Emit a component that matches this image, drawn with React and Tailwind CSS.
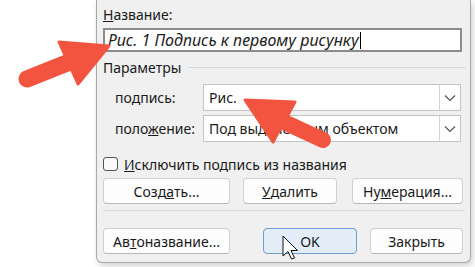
import React from "react";

const font = { fontFamily: '"Noto Sans", "Open Sans", sans-serif' };

function Chevron() {
  return (
    <svg width="12" height="8" viewBox="0 0 12 8">
      <polyline points="1,1.5 6,6.5 11,1.5" fill="none" stroke="#555" strokeWidth="1.2" />
    </svg>
  );
}

function Combo({ text }) {
  return (
    <div className="flex h-[27px] w-[258px] items-stretch border border-[#c4c4c4] bg-white">
      <div className="flex flex-1 items-center pl-[5px] text-[14px] text-[#1a1a1a]">{text}</div>
      <div className="flex w-[21px] items-center justify-center border-l border-[#d4d4d4]">
        <Chevron />
      </div>
    </div>
  );
}

function Btn({ w, children, primary }) {
  return (
    <div
      className={
        "flex h-[26px] items-center justify-center rounded-[4px] text-[14px] text-[#1a1a1a] " +
        (primary
          ? "border border-[#6e9fd0] bg-[#e3edf8]"
          : "border border-[#d0d0d0] border-b-[#b8b8b8] bg-[#fdfdfd]")
      }
      style={{ width: w }}
    >
      {children}
    </div>
  );
}

export default function App() {
  return (
    <div className="relative h-[267px] w-[475px] overflow-hidden bg-white" style={font}>
      <div className="flex pl-[96px]">
        {/* диалог */}
        <div className="h-[263px] w-[375px] rounded-b-[6px] border-x border-b border-[#a9a9a9] bg-[#f0f0f0] pl-[6px] pr-[4px] pt-[6px] shadow-[2px_3px_6px_rgba(0,0,0,0.18)]">
          <div className="h-[18px] text-[14px] leading-[18px] text-[#1a1a1a]">
            <span className="underline">Н</span>азвание:
          </div>
          <div className="mt-[4px] flex h-[24px] w-[359px] items-center border-2 border-[#8c8c8c] bg-white pl-[3px]">
            <span className="text-[16px] italic leading-[20px] text-[#222]">Рис. 1 Подпись к первому рисунку</span>
            <span className="ml-[1px] h-[17px] border-l border-black" />
          </div>
          <div className="mt-[6px] flex h-[18px] items-center">
            <span className="text-[14px] text-[#1a1a1a]">Параметры</span>
            <div className="ml-[7px] h-px flex-1 bg-[#d8d8d8]" />
          </div>
          <div className="mt-[8px] flex items-center">
            <span className="w-[100px] pl-[12px] text-[14px] text-[#1a1a1a]">
              по<span className="underline">д</span>пись:
            </span>
            <Combo text="Рис." />
          </div>
          <div className="mt-[4px] flex items-center">
            <span className="w-[100px] pl-[12px] text-[14px] text-[#1a1a1a]">
              поло<span className="underline">ж</span>ение:
            </span>
            <Combo text="Под выделенным объектом" />
          </div>
          <div className="mt-[15px] flex h-[14px] items-center">
            <div className="h-[14px] w-[15px] rounded-[3px] border border-[#555] bg-[#fafafa]" />
            <span className="ml-[6px] text-[14px] text-[#1a1a1a]">
              <span className="underline">И</span>сключить подпись из названия
            </span>
          </div>
          <div className="mt-[7px] flex">
            <Btn w={127}>
              Созд<span className="underline">а</span>ть...
            </Btn>
            <div className="ml-[13px]">
              <Btn w={94}>
                <span className="underline">У</span>далить
              </Btn>
            </div>
            <div className="ml-[15px]">
              <Btn w={111}>
                Ну<span className="underline">м</span>ерация...
              </Btn>
            </div>
          </div>
          <div className="mt-[6px] h-px w-[362px] bg-[#dadada]" />
          <div className="mt-[17px] flex">
            <Btn w={127}>
              Ав<span className="underline">т</span>оназвание...
            </Btn>
            <div className="ml-[33px]">
              <Btn w={94} primary>
                OK
              </Btn>
            </div>
            <div className="ml-[13px]">
              <Btn w={93}>Закрыть</Btn>
            </div>
          </div>
        </div>
      </div>

      {/* стрелки и курсор поверх */}
      <svg className="pointer-events-none absolute left-0 top-0" width="475" height="267" viewBox="0 0 475 267">
        <g fill="#f25440" stroke="#f25440" strokeLinejoin="round">
          <line x1="27" y1="79" x2="72" y2="61" strokeWidth="17" strokeLinecap="round" />
          <polygon points="109,46 59,42 78,84" strokeWidth="3" />
          <line x1="284" y1="122" x2="323" y2="140" strokeWidth="16" strokeLinecap="round" />
          <polygon points="245,100 295,102 273,142" strokeWidth="3" />
        </g>
        <path
          d="M283 236 L283 256 L288 251.5 L291.5 259 L294.5 258 L291 250.5 L297.5 250.5 Z"
          fill="#fff"
          stroke="#111"
          strokeWidth="1"
          strokeLinejoin="round"
        />
      </svg>
    </div>
  );
}
